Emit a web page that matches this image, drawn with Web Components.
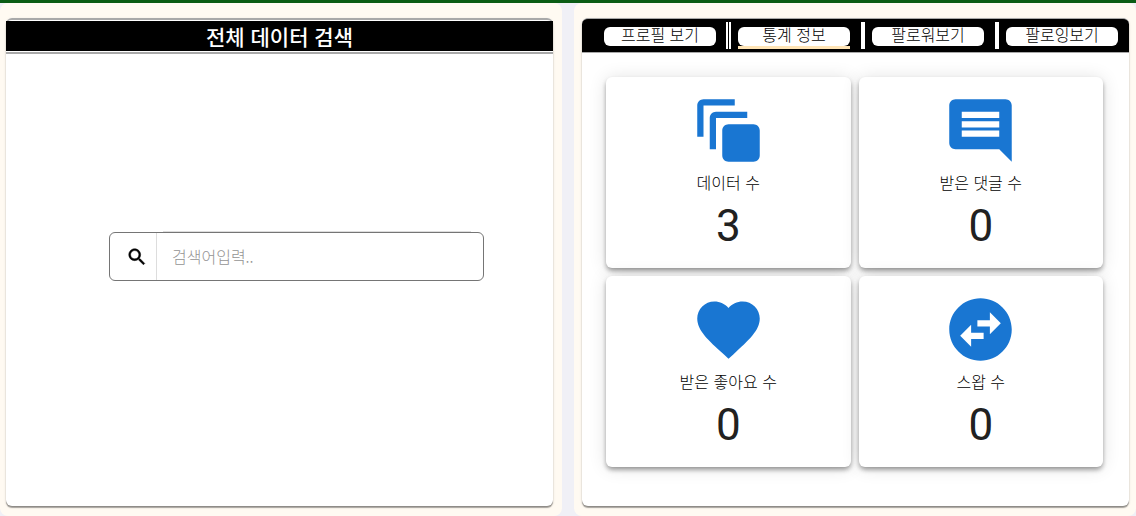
<!DOCTYPE html>
<html lang="ko">
<head>
<meta charset="utf-8">
<meta name="viewport" content="width=device-width, initial-scale=1">
<title>전체 데이터 검색</title>
<style>
  body { margin: 0; background: #f0f0f6; color: #212121; font: 400 16px/24px Roboto, "Noto Sans CJK KR", sans-serif; }
</style>
</head>
<body>
<app-page>
  <side-panel style="--pad: 15px 9px 10px 6px">
    <panel-title>전체 데이터 검색</panel-title>
    <search-box placeholder="검색어입력.."></search-box>
  </side-panel>
  <side-panel style="--pad: 15px 7px 10px 8px">
    <tab-bar>
      <tab-item>프로필 보기</tab-item>
      <tab-divider double></tab-divider>
      <tab-item selected>통계 정보</tab-item>
      <tab-divider></tab-divider>
      <tab-item>팔로워보기</tab-item>
      <tab-divider></tab-divider>
      <tab-item>팔로잉보기</tab-item>
    </tab-bar>
    <stat-grid>
      <stat-card icon="stack" value="3">데이터 수</stat-card>
      <stat-card icon="comment" value="0">받은 댓글 수</stat-card>
      <stat-card icon="heart" value="0">받은 좋아요 수</stat-card>
      <stat-card icon="swap" value="0">스왑 수</stat-card>
    </stat-grid>
  </side-panel>
</app-page>
<script>
const ICONS = {
  stack: 'M14 2H4c-1.11 0-2 .9-2 2v10h2V4h10V2zm4 4H8c-1.11 0-2 .9-2 2v10h2V8h10V6zm2 4h-8c-1.11 0-2 .9-2 2v8c0 1.1.89 2 2 2h8c1.1 0 2-.9 2-2v-8c0-1.1-.9-2-2-2z',
  comment: 'M21.99 4c0-1.1-.89-2-1.99-2H4c-1.1 0-2 .9-2 2v12c0 1.1.9 2 2 2h14l4 4-.01-18zM18 14H6v-2h12v2zm0-3H6V9h12v2zm0-3H6V6h12v2z',
  heart: 'M12 21.35l-1.45-1.32C5.4 15.36 2 12.28 2 8.5 2 5.42 4.42 3 7.5 3c1.74 0 3.41.81 4.5 2.09C13.09 3.81 14.76 3 16.5 3 19.58 3 22 5.42 22 8.5c0 3.78-3.4 6.86-8.55 11.54L12 21.35z',
  swap: 'M22 12c0-5.52-4.48-10-10-10S2 6.48 2 12s4.48 10 10 10 10-4.48 10-10zm-7-5.5l3.5 3.5-3.5 3.5V11h-4V9h4V6.5zm-6 11L5.5 14 9 10.5V13h4v2H9v2.5z',
  search: 'M15.5 14h-.79l-.28-.27C15.41 12.59 16 11.11 16 9.5 16 5.91 13.09 3 9.5 3S3 5.91 3 9.5 5.91 16 9.5 16c1.61 0 3.09-.59 4.23-1.57l.27.28v.79l5 4.99L20.49 19l-4.99-5zm-6 0C7.01 14 5 11.99 5 9.5S7.01 5 9.5 5 14 7.01 14 9.5 11.99 14 9.5 14z'
};

function define(name, render) {
  customElements.define(name, class extends HTMLElement {
    constructor() { super(); this.attachShadow({ mode: 'open' }); }
    connectedCallback() { this.shadowRoot.innerHTML = render(this); }
  });
}

define('app-page', () => `
  <style>
    :host { display: block; }
    main { box-sizing: border-box; min-height: 100vh; border-top: 3px solid #0a5c14;
      display: grid; grid-template-columns: 1fr 1fr; gap: 12px; }
  </style>
  <main><slot></slot></main>`);

define('side-panel', () => `
  <style>
    :host { display: flex; box-sizing: border-box; min-width: 0; padding: var(--pad);
      background: #fffaf2; border-radius: 8px; }
    section { flex: 1; min-width: 0; display: flex; flex-direction: column; background: #fff; border-radius: 6px;
      box-shadow: 0 2px 1px 0 rgba(0,0,0,.3), 0 1px 1px 0 rgba(0,0,0,.14), 0 1px 3px 0 rgba(0,0,0,.12); }
  </style>
  <section><slot></slot></section>`);

define('panel-title', () => `
  <style>
    :host { display: block; border: solid #a9a9a9; border-width: 2px 0; border-radius: 6px 6px 0 0; padding: 1px 0; }
    h1 { margin: 0; background: #000; color: #fff; text-align: center;
      font: 500 21px/30px "Noto Sans CJK KR", sans-serif; }
  </style>
  <h1><slot></slot></h1>`);

define('search-box', el => `
  <style>
    :host { display: block; padding: 178px 69px 178px 103px; }
    label { position: relative; display: flex; align-items: stretch; height: 47px; border: 1px solid #757575; border-radius: 6px; background: #fff; }
    label::before { content: ""; position: absolute; top: -2px; left: 53px; right: 12px; height: 1px; background: #ddd; }
    svg { width: 22px; height: 22px; margin: 13px 8px 0 16px; fill: #000; stroke: #000; stroke-width: .5; flex: none; }
    input { flex: 1; min-width: 0; border: 0; border-left: 1px solid #ddd; outline: 0; padding: 0 15px 2px;
      background: none; color: #212121; font: 300 16px/24px "Noto Sans CJK KR", sans-serif; }
    input::placeholder { color: #949494; opacity: 1; }
  </style>
  <label>
    <svg viewBox="0 0 24 24" aria-hidden="true"><path d="${ICONS.search}"/></svg>
    <input type="search" aria-label="검색어" placeholder="${el.getAttribute('placeholder')}">
  </label>`);

define('tab-bar', () => `
  <style>
    nav { box-sizing: border-box; height: 35px; display: flex; padding: 3px 11px 3px 22px; background: #000;
      border: solid #a9a9a9; border-width: 1px 0; border-radius: 6px 6px 0 0; }
  </style>
  <nav><slot></slot></nav>`);

define('tab-item', () => `
  <style>
    :host { flex: 1; min-width: 0; display: flex; flex-direction: column; padding-top: 5px; box-sizing: border-box; }
    :host([selected]) { border-bottom: 3px solid #ffe4b5; }
    button { width: 100%; height: 19px; border: 0; border-radius: 6px; padding: 0 0 4px; background: #fff; color: #000;
      font: 300 16px/15px "Noto Sans CJK KR", sans-serif; white-space: nowrap; }
  </style>
  <button type="button"><slot></slot></button>`);

define('tab-divider', () => `
  <style>
    :host { flex: none; box-sizing: border-box; width: 22px; padding-right: 7px; display: flex; justify-content: flex-end; }
    i { width: 4px; background: #fff; }
    :host([double]) i { width: 1px; background: #000; border: solid #fff; border-width: 0 2px; }
  </style>
  <i></i>`);

define('stat-grid', () => `
  <style>
    :host { display: grid; grid-template-columns: 1fr 1fr; gap: 8px; padding: 24px 26px 24px 24px; }
  </style>
  <slot></slot>`);

define('stat-card', el => `
  <style>
    :host { display: flex; flex-direction: column; align-items: center; padding: 16px 16px 14px; background: #fff; border-radius: 6px;
      box-shadow: 0 3px 5px -1px rgba(0,0,0,.3), 0 3px 5px 0 rgba(0,0,0,.14), 0 1px 18px 0 rgba(0,0,0,.12); }
    svg { width: 75px; height: 75px; fill: #1976d2; }
    span { font: 300 16px/24px "Noto Sans CJK KR", sans-serif; color: #000; padding-top: 2px; }
    strong { font: 400 44px/56px Roboto, sans-serif; padding-top: 4px; }
  </style>
  <svg viewBox="0 0 24 24" aria-hidden="true"><path d="${ICONS[el.getAttribute('icon')]}"/></svg>
  <span><slot></slot></span>
  <strong>${el.getAttribute('value')}</strong>`);
</script>
</body>
</html>
